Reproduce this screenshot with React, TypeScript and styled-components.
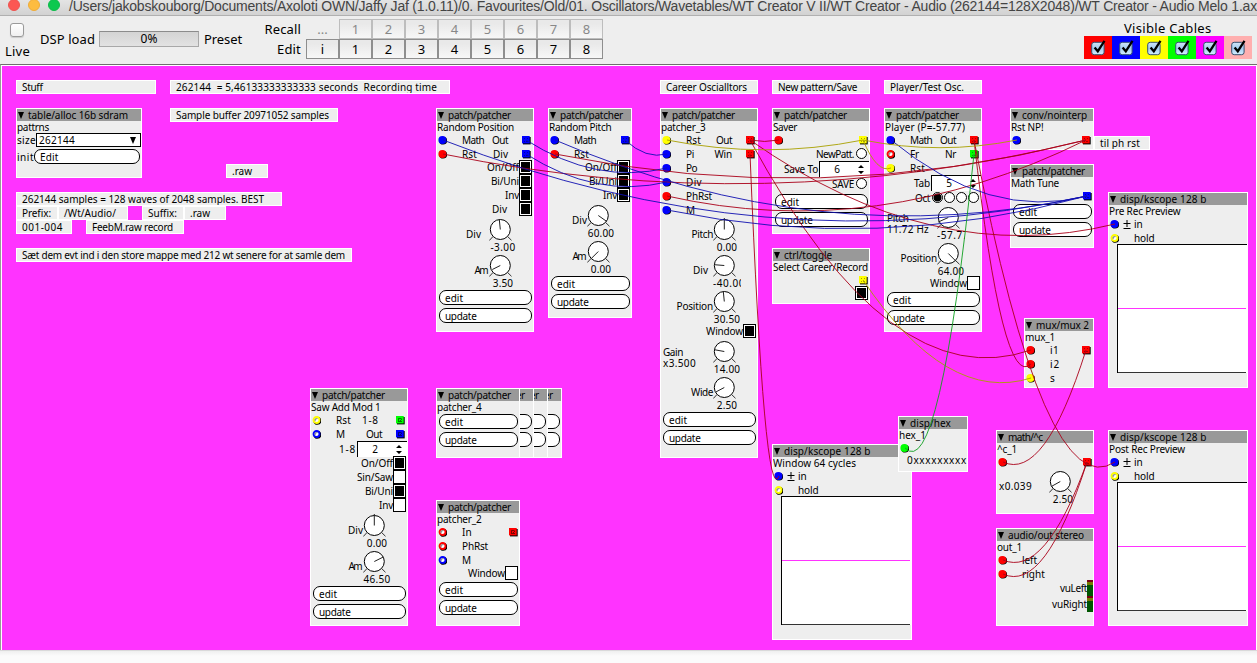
import React, { useLayoutEffect, useRef, useState } from "react";
import styled, { createGlobalStyle } from "styled-components";

const Global = createGlobalStyle`
  * { box-sizing: border-box; }
  html, body { margin: 0; padding: 0; overflow: hidden; background: #fafafa; }
  body { font-family: "Noto Sans", sans-serif; color: #000; }
`;

const COLORS = { red: "#ff0000", blue: "#0000ff", yellow: "#ffff00", green: "#00ff00" };
type Color = keyof typeof COLORS;

/* ---------- text ---------- */

const TextSpan = styled.span<{ $size: number; $color: string }>`
  display: inline-block;
  flex: none;
  font-size: ${(p) => p.$size}px;
  line-height: 12px;
  color: ${(p) => p.$color};
  white-space: pre;
`;

interface TextProps {
  children: string;
  w?: number;
  size?: number;
  color?: string;
}

/* Tracks its letters so that the string takes exactly w pixels. */
function Text({ children, w, size = 10, color = "#000" }: TextProps) {
  const ref = useRef<HTMLSpanElement>(null);
  const [spacing, setSpacing] = useState(0);
  useLayoutEffect(() => {
    const el = ref.current;
    if (!el || !w) return;
    el.style.letterSpacing = "0px";
    const natural = el.getBoundingClientRect().width;
    setSpacing((w - natural) / Math.max(1, children.length));
  }, [w, children]);
  return (
    <TextSpan ref={ref} $size={size} $color={color} style={{ letterSpacing: `${spacing}px` }}>
      {children}
    </TextSpan>
  );
}

/* ---------- window chrome ---------- */

const Window = styled.div`
  width: 1257px;
  height: 663px;
  display: flex;
  flex-direction: column;
  overflow: hidden;
`;

const TitleBar = styled.div`
  height: 16px;
  flex: none;
  display: flex;
  align-items: flex-start;
  background: linear-gradient(#e4e4e4, #d2d2d2);
  border-bottom: 1px solid #b0b0b0;
  overflow: hidden;
  font-family: "Liberation Sans", sans-serif;
`;

const Lights = styled.div`
  display: flex;
  gap: 8px;
  padding-left: 8px;
  margin-top: -1px;
  width: 69px;
  flex: none;
`;

const Light = styled.span<{ $fill: string; $edge: string }>`
  width: 12px;
  height: 12px;
  border-radius: 50%;
  background: ${(p) => p.$fill};
  border: 1px solid ${(p) => p.$edge};
`;

const TitleText = styled.div`
  display: flex;
  align-items: flex-start;
  height: 15px;
  white-space: pre;
`;

const Toolbar = styled.div`
  height: 48px;
  flex: none;
  display: flex;
  background: #eeeeee;
  padding-left: 5px;
`;

const LiveBox = styled.div`
  width: 35px;
  display: flex;
  flex-direction: column;
  align-items: flex-start;
  padding-top: 7px;
`;

const LiveCheck = styled.span`
  width: 14px;
  height: 14px;
  margin: 0 0 8px 5px;
  border: 1px solid #9a9a9a;
  border-radius: 3px;
  background: linear-gradient(#ffffff, #f0f0f0);
  box-shadow: 0 1px 1px rgba(0, 0, 0, 0.15);
`;

const DspGroup = styled.div`
  display: flex;
  align-items: center;
  height: 46px;
  width: 219px;
  gap: 5px;
`;

const DspBar = styled.div`
  width: 100px;
  height: 16px;
  margin-left: -1px;
  border: 1px solid #a8a8a8;
  border-top-color: #8c8c8c;
  background: linear-gradient(#d4d4d4, #e2e2e2);
  display: flex;
  align-items: center;
  justify-content: center;
`;

const PresetLabels = styled.div`
  width: 42px;
  padding-top: 3px;
  display: flex;
  flex-direction: column;
  align-items: flex-end;
`;

const PresetLabel = styled.div`
  height: 20px;
  display: flex;
  align-items: center;
`;

const PresetGrid = styled.div`
  margin-left: 5px;
  padding-top: 3px;
  display: grid;
  grid-template-columns: repeat(9, 33px);
  grid-template-rows: 20px 20px;
  width: 297px;
  align-content: start;
`;

const PresetButton = styled.div<{ $kind: "off" | "on" | "bare" }>`
  display: flex;
  align-items: center;
  justify-content: center;
  border: ${(p) => (p.$kind === "bare" ? "0" : p.$kind === "on" ? "1px solid #8e8e8e" : "1px solid #bdbdbd")};
  background: ${(p) => (p.$kind === "bare" ? "none" : "linear-gradient(#e9e9e9 20%, #f7f7f7)")};
`;

const CablesGroup = styled.div`
  margin-left: auto;
  width: 173px;
  padding-top: 6px;
  display: flex;
  flex-direction: column;
`;

const CablesTitle = styled.div`
  height: 14px;
  display: flex;
  align-items: flex-start;
  padding-left: 40px;
`;

const Swatches = styled.div`
  display: flex;
`;

const Swatch = styled.div<{ $bg: string }>`
  width: 28px;
  height: 23px;
  background: ${(p) => p.$bg};
  display: flex;
  align-items: center;
  justify-content: center;
`;

function CheckIcon() {
  return (
    <svg width="18" height="18" viewBox="0 0 18 18">
      <defs>
        <linearGradient id="aqua" x1="0" y1="0" x2="0" y2="1">
          <stop offset="0" stopColor="#cfe4f7" />
          <stop offset="0.5" stopColor="#a5cdf0" />
          <stop offset="1" stopColor="#d5f0ff" />
        </linearGradient>
      </defs>
      <rect x="2.7" y="3.3" width="12.4" height="12.4" rx="2.5" fill="url(#aqua)" stroke="#36506e" />
      <path d="M5.6 8.5 L8.8 12.3 L15.5 1.8" fill="none" stroke="#000" strokeWidth="2.3" />
    </svg>
  );
}

/* ---------- patch canvas ---------- */

const Canvas = styled.div`
  position: relative;
  height: 586px;
  flex: none;
  background: #ff33ff;
  border-top: 1px solid #6e6e6e;
  border-left: 1px solid #999999;
  overflow: hidden;
  &::before {
    content: "";
    position: absolute;
    inset: 0;
    border: 1px solid #ffffff;
    border-bottom: 0;
  }
`;

const Footer = styled.div`
  flex: 1;
  border-top: 1px solid #d9d9d9;
  background: linear-gradient(#efefef, #fbfbfb 5px);
`;

/* Shifts patch coordinates so that they count from the window corner. */
const Patch = styled.div`
  position: absolute;
  left: -1px;
  top: -65px;
  width: 1257px;
  height: 663px;
`;

const Place = styled.div<{ $x: number; $y: number; $w: number; $h: number }>`
  position: absolute;
  left: ${(p) => p.$x}px;
  top: ${(p) => p.$y}px;
  width: ${(p) => p.$w}px;
  height: ${(p) => p.$h}px;
  background: #eeeeee;
  border: 1px solid #ffffff;
  overflow: hidden;
`;

const NotePlace = styled(Place)`
  display: flex;
  align-items: center;
  padding-left: 5px;
`;

const Header = styled.div`
  height: 12px;
  display: flex;
  align-items: center;
  gap: 4px;
  padding-left: 1px;
  background: #999999;
`;

const Caption = styled.div`
  height: 12px;
  display: flex;
  align-items: center;
`;

const Row = styled.div<{ $h?: number; $lift?: number }>`
  height: ${(p) => p.$h ?? 14}px;
  padding-bottom: ${(p) => p.$lift ?? 0}px;
  display: flex;
  align-items: center;
`;

const PortLabel = styled.span`
  display: flex;
  padding-bottom: 1px;
`;

const Spring = styled.span`
  flex: 1;
`;

const Gap = styled.span<{ $w: number }>`
  width: ${(p) => p.$w}px;
  flex: none;
  display: flex;
  align-items: center;
  justify-content: center;
`;

interface NoteProps { x: number; y: number; w: number; text: string; tw: number }

function Note({ x, y, w, text, tw }: NoteProps) {
  return (
    <NotePlace $x={x} $y={y} $w={w} $h={14}>
      <Text w={tw}>{text}</Text>
    </NotePlace>
  );
}

interface ModuleProps {
  x: number; y: number; w: number; h: number;
  type: string; typeW: number;
  name: string; nameW: number;
  children?: React.ReactNode;
}

function Module({ x, y, w, h, type, typeW, name, nameW, children }: ModuleProps) {
  return (
    <Place $x={x} $y={y} $w={w} $h={h}>
      <Header>
        <svg width="6" height="7" viewBox="0 0 6 7"><path d="M0 0H6L3 7Z" /></svg>
        <Text w={typeW - 1}>{type}</Text>
      </Header>
      <Caption><Text w={nameW}>{name}</Text></Caption>
      {children}
    </Place>
  );
}

function Jack({ color, open }: { color: Color; open?: boolean }) {
  return (
    <svg width="10" height="10" viewBox="0 0 10 10">
      {open ? (
        <>
          <circle cx="6.3" cy="5.8" r="3.1" fill="none" stroke="#000" strokeWidth="1.8" />
          <circle cx="5.5" cy="5" r="3" fill="#fff" stroke={COLORS[color]} strokeWidth="1.8" />
          <path d="M4.1 6.2L4.1 4L6.5 3.6" fill="none" stroke="#444" strokeWidth="0.7" />
        </>
      ) : (
        <>
          <circle cx="6.2" cy="5.7" r="3.9" fill="#000" />
          <circle cx="5.4" cy="4.9" r="4" fill={COLORS[color]} />
        </>
      )}
    </svg>
  );
}

function Outlet({ color, open }: { color: Color; open?: boolean }) {
  return (
    <svg width="9" height="10" viewBox="0 0 9 10">
      <rect x="1" y="2" width="7.7" height="7.4" fill="#000" />
      <rect x="0" y="1" width="7.7" height="7.4" fill={COLORS[color]} />
      {open ? (
        <path d="M2.5 7V3.5H5.5M3 7L6 4M4 6.5H6" fill="none" stroke="#000" strokeOpacity="0.65" strokeWidth="0.8" />
      ) : (
        <path d="M2 3h1v1h-1zM5 3h1v1h-1zM2 6h1v1h-1zM4 6h2v1h-2z" fill="#000" fillOpacity="0.35" />
      )}
    </svg>
  );
}

interface PortProps {
  in?: Color; inOpen?: boolean; label?: string; lw?: number; sign?: boolean;
  out?: Color; outOpen?: boolean; outLabel?: string; ow?: number; edge?: number;
}

function Port(p: PortProps) {
  return (
    <Row>
      {p.in ? <Jack color={p.in} open={p.inOpen} /> : <Gap $w={10} />}
      <Gap $w={15}>
        {p.sign ? <svg width="8" height="10" viewBox="0 0 8 10"><path d="M0.5 4.5H7.5M4 1V8M0.5 9.5H7.5" stroke="#000" fill="none" /></svg> : null}
      </Gap>
      {p.label ? <PortLabel><Text w={p.lw}>{p.label}</Text></PortLabel> : null}
      <Spring />
      {p.outLabel ? <PortLabel><Text w={p.ow}>{p.outLabel}</Text></PortLabel> : null}
      {p.out ? <><Gap $w={14} /><Outlet color={p.out} open={p.outOpen} /><Gap $w={p.edge ?? 2} /></> : null}
    </Row>
  );
}

const ToggleBox = styled.span<{ $on: boolean }>`
  width: 13px;
  height: 14px;
  flex: none;
  border: 1px solid #000;
  margin-right: 1px;
  background: ${(p) => (p.$on ? "#000" : "#fff")};
  box-shadow: ${(p) => (p.$on ? "inset 0 0 0 1px #fff" : "none")};
`;

function Toggle({ label, lw, on = false, pad = 0 }: { label?: string; lw?: number; on?: boolean; pad?: number }) {
  return (
    <Row $lift={2}>
      <Spring />
      {label ? <Text w={lw}>{label}</Text> : null}
      <Gap $w={pad} />
      <ToggleBox $on={on} />
    </Row>
  );
}

const Radio = styled.span<{ $on?: boolean }>`
  width: 11px;
  height: 11px;
  margin-right: 1px;
  flex: none;
  border-radius: 50%;
  border: 1px solid #000;
  background: ${(p) => (p.$on ? "radial-gradient(#000 0 3.6px, #fff 4.4px)" : "#fff")};
`;

function Radios({ label, lw, count = 1, on = -1 }: { label: string; lw: number; count?: number; on?: number }) {
  return (
    <Row $lift={1}>
      <Spring />
      <Text w={lw}>{label}</Text>
      <Gap $w={2} />
      {Array.from({ length: count }, (_, i) => <Radio key={i} $on={i === on} />)}
      <Gap $w={1} />
    </Row>
  );
}

const SpinBox = styled.span`
  width: 50px;
  height: 16px;
  flex: none;
  display: flex;
  align-items: center;
  background: #fff;
  border-top: 1px solid #000;
  border-left: 1px solid #000;
`;

const SpinValue = styled.span`
  width: 34px;
  padding-bottom: 1px;
  display: flex;
  justify-content: center;
`;

function Spinner({ label, lw, value }: { label: string; lw: number; value: string }) {
  return (
    <Row $h={16} $lift={1}>
      <Spring />
      <Text w={lw}>{label}</Text>
      <Gap $w={1} />
      <SpinBox>
        <SpinValue><Text>{value}</Text></SpinValue>
        <Gap $w={14}>
          <svg width="6" height="9" viewBox="0 0 6 9"><path d="M0 3L3 0L6 3ZM0 6L3 9L6 6Z" /></svg>
        </Gap>
      </SpinBox>
    </Row>
  );
}

const KnobRow = styled.div`
  height: 36px;
  display: flex;
`;

const KnobSide = styled.div`
  flex: 1;
  display: flex;
  flex-direction: column;
  align-items: flex-end;
  padding-top: 11px;
`;

const GainSide = styled.div<{ $top: number }>`
  flex: 1;
  padding: ${(p) => p.$top}px 0 0 2px;
  display: flex;
  flex-direction: column;
  align-items: flex-start;
`;

const KnobColumn = styled.div`
  width: 28px;
  margin-right: 16px;
  flex: none;
  display: flex;
  flex-direction: column;
`;

const KnobValue = styled.div`
  height: 12px;
  display: flex;
  justify-content: safe center;
  overflow: hidden;
`;

interface KnobProps {
  label?: string; lw?: number; pad?: number; value: string; vw: number; tip: [number, number];
  side?: React.ReactNode;
}

function Knob({ label, lw, pad = 0, value, vw, tip, side }: KnobProps) {
  return (
    <KnobRow>
      {side ?? (
        <KnobSide>
          <Row $h={12}>
            {label ? <Text w={lw}>{label}</Text> : null}
            <Gap $w={pad} />
          </Row>
        </KnobSide>
      )}
      <KnobColumn>
        <svg width="28" height="24" viewBox="0 0 28 24">
          <path d="M4 19.5L0.3 23.5M18.6 19.5L22.5 23.3" stroke="#333" fill="none" />
          <circle cx="11.3" cy="12.5" r="10" fill="#fff" stroke="#000" />
          <path d={`M11.3 12.5l${tip[0]} ${tip[1]}`} stroke="#222" fill="none" />
        </svg>
        <KnobValue><Text w={vw}>{value}</Text></KnobValue>
      </KnobColumn>
    </KnobRow>
  );
}

const PillRow = styled.div`
  height: 18px;
  padding: 1px 1px 0 2px;
`;

const Pill = styled.div`
  height: 15px;
  border: 1px solid #000;
  border-radius: 7px;
  background: #fff;
  display: flex;
  align-items: center;
  padding-left: 5px;
  flex: 1;
`;

function EditUpdate() {
  return (
    <>
      <PillRow><Pill><Text w={18}>edit</Text></Pill></PillRow>
      <PillRow><Pill><Text w={31.5}>update</Text></Pill></PillRow>
    </>
  );
}

const Combo = styled.div`
  flex: 1;
  height: 14px;
  background: #fff;
  border: 1px solid #000;
  display: flex;
  align-items: center;
  justify-content: space-between;
  padding: 0 4px 0 2px;
`;

const InitRow = styled.div`
  margin-top: 2px;
  padding: 0 1px 0 0;
  display: flex;
  align-items: center;
`;

const Scope = styled.div`
  margin: -1px 0 0 8px;
  height: 129px;
  flex: none;
  background: #fff;
  border-top: 1px solid #000;
  border-left: 1px solid #000;
  display: flex;
  flex-direction: column;
`;

const ScopeTrace = styled.div`
  margin: 63px 1px 0 0;
  height: 1px;
  background: #ff33ff;
`;

const ScopeFloor = styled.div`
  margin: 63px 1px 0 0;
  height: 1px;
  background: #333;
`;

function KScope({ x, y, name, nameW }: { x: number; y: number; name: string; nameW: number }) {
  return (
    <Module x={x} y={y} w={140} h={196} type="disp/kscope 128 b" typeW={87.5} name={name} nameW={nameW}>
      <Port in="blue" sign label="in" lw={8.5} />
      <Port in="yellow" inOpen label="hold" lw={20.5} />
      <Scope><ScopeTrace /><ScopeFloor /></Scope>
    </Module>
  );
}

const Meter = styled.span`
  width: 6px;
  height: 16px;
  flex: none;
  background: linear-gradient(#770011 0 2px, #777700 2px 5px, #005500 5px);
`;

function Patcher4({ x }: { x: number }) {
  return (
    <Module x={x} y={388} w={84} h={70} type="patch/patcher" typeW={64} name="patcher_4" nameW={44.5}>
      <EditUpdate />
    </Module>
  );
}

/* ---------- cables ---------- */

const CableLayer = styled.svg`
  position: absolute;
  left: 0;
  top: 0;
  pointer-events: none;
`;

const CABLE_COLORS: Record<Color, string> = {
  red: "#aa0018", blue: "#1010b0", yellow: "#a8a000", green: "#10a020",
};

type Cable = [Color, number, number, number, number];

const CABLES: Cable[] = [
  ["red", 750, 140, 779, 140],
  ["red", 750, 140, 1031, 350],
  ["red", 750, 140, 1115, 224],
  ["red", 443, 154, 1086, 140],
  ["red", 555, 154, 1086, 140],
  ["red", 667, 196, 1086, 140],
  ["red", 750, 154, 779, 476],
  ["red", 974, 140, 1031, 364],
  ["red", 974, 140, 1115, 462],
  ["red", 1087, 462, 1003, 560],
  ["red", 1087, 462, 1003, 574],
  ["red", 1086, 350, 1003, 462],
  ["blue", 526, 140, 667, 168],
  ["blue", 526, 154, 667, 182],
  ["blue", 625, 140, 667, 154],
  ["blue", 443, 140, 1087, 196],
  ["blue", 555, 140, 1087, 196],
  ["blue", 667, 210, 1087, 196],
  ["blue", 891, 140, 1087, 196],
  ["yellow", 863, 140, 667, 140],
  ["yellow", 863, 140, 891, 168],
  ["yellow", 863, 140, 1017, 140],
  ["yellow", 863, 280, 1031, 378],
  ["green", 974, 154, 905, 448],
];

function cablePath([, x1, y1, x2, y2]: Cable) {
  const sagY = Math.max(y1, y2) + Math.abs(y2 - y1) * 0.1 + Math.abs(x2 - x1) * 0.1;
  return `M${x1} ${y1}Q${(x1 + x2) / 2} ${sagY} ${x2} ${y2}`;
}

const NOTES: NoteProps[] = [
  { x: 16, y: 80, w: 140, text: "Stuff", tw: 20.5 },
  { x: 170, y: 80, w: 280, text: "262144  = 5,46133333333333 seconds  Recording time", tw: 261 },
  { x: 170, y: 108, w: 168, text: "Sample buffer 20971052 samples", tw: 153 },
  { x: 660, y: 80, w: 98, text: "Career Oscialltors", tw: 81 },
  { x: 772, y: 80, w: 98, text: "New pattern/Save", tw: 79 },
  { x: 884, y: 80, w: 98, text: "Player/Test Osc.", tw: 74 },
  { x: 226, y: 164, w: 42, text: ".raw", tw: 20 },
  { x: 16, y: 192, w: 266, text: "262144 samples = 128 waves of 2048 samples. BEST", tw: 242 },
  { x: 16, y: 206, w: 42, text: "Prefix:", tw: 29 },
  { x: 58, y: 206, w: 70, text: "/Wt/Audio/", tw: 52 },
  { x: 142, y: 206, w: 42, text: "Suffix:", tw: 29 },
  { x: 184, y: 206, w: 42, text: ".raw", tw: 20 },
  { x: 16, y: 220, w: 56, text: "001-004", tw: 41 },
  { x: 86, y: 220, w: 98, text: "FeebM.raw record", tw: 81 },
  { x: 16, y: 248, w: 336, text: "Sæt dem evt ind i den store mappe med 212 wt senere for at samle dem", tw: 323 },
];

const TITLE =
  "/Users/jakobskouborg/Documents/Axoloti OWN/Jaffy Jaf (1.0.11)/0. Favourites/Old/01. Oscillators/Wavetables/WT Creator V II/WT Creator - Audio (262144=128X2048)/WT Creator - Audio Melo 1.ax";

export default function App() {
  const presets = ["1", "2", "3", "4", "5", "6", "7", "8"];
  return (
    <>
      <Global />
      <Window>
        <TitleBar>
          <Lights>
            <Light $fill="#fc5753" $edge="#ee5450" />
            <Light $fill="#fdbc40" $edge="#efac38" />
            <Light $fill="#0cc84f" $edge="#0dbb4a" />
          </Lights>
          <TitleText><Text w={1188} size={14} color="#444">{TITLE}</Text></TitleText>
        </TitleBar>

        <Toolbar>
          <LiveBox>
            <LiveCheck />
            <Text w={25} size={13}>Live</Text>
          </LiveBox>
          <DspGroup>
            <Text w={55} size={13}>DSP load</Text>
            <DspBar><Text w={17} size={12}>0%</Text></DspBar>
            <Text w={38} size={13}>Preset</Text>
          </DspGroup>
          <PresetLabels>
            <PresetLabel><Text w={36.5} size={13}>Recall</Text></PresetLabel>
            <PresetLabel><Text w={24} size={13}>Edit</Text></PresetLabel>
          </PresetLabels>
          <PresetGrid>
            <PresetButton $kind="bare"><Text size={13} color="#888">...</Text></PresetButton>
            {presets.map((n) => (
              <PresetButton key={n} $kind="off"><Text size={13} color="#888">{n}</Text></PresetButton>
            ))}
            {["i", ...presets].map((n) => (
              <PresetButton key={n} $kind="on"><Text size={13}>{n}</Text></PresetButton>
            ))}
          </PresetGrid>
          <CablesGroup>
            <CablesTitle><Text w={87.5} size={13}>Visible Cables</Text></CablesTitle>
            <Swatches>
              {["#ff0000", "#0000ff", "#ffff00", "#00ff00", "#ff00ff", "#ffafaf"].map((c) => (
                <Swatch key={c} $bg={c}><CheckIcon /></Swatch>
              ))}
            </Swatches>
          </CablesGroup>
        </Toolbar>

        <Canvas>
          <Patch>
            {NOTES.map((n) => <Note key={`${n.x}-${n.y}`} {...n} />)}

            <Module x={16} y={108} w={126} h={70} type="table/alloc 16b sdram" typeW={101} name="pattrns" nameW={32}>
              <Row>
                <Text w={19}>size</Text>
                <Combo>
                  <Text w={36}>262144</Text>
                  <svg width="6" height="7" viewBox="0 0 6 7"><path d="M0 0H6L3 7Z" /></svg>
                </Combo>
              </Row>
              <InitRow>
                <Text w={17}>init</Text>
                <Pill><Text w={18.5}>Edit</Text></Pill>
              </InitRow>
            </Module>

            <Module x={436} y={108} w={98} h={224} type="patch/patcher" typeW={64} name="Random Position" nameW={77}>
              <Port in="blue" label="Math" lw={22} out="blue" outLabel="Out" ow={16} />
              <Port in="red" label="Rst" lw={15} out="blue" outLabel="Div" ow={15} />
              <Toggle label="On/Off" lw={32} on />
              <Toggle label="Bi/Uni" lw={28} on />
              <Toggle label="Inv" lw={14} on />
              <Toggle label="Div" lw={15} on pad={12} />
              <Knob label="Div" lw={15} pad={8} value="-3.00" vw={25} tip={[-1, -10]} />
              <Knob label="Am" lw={12.5} pad={2} value="3.50" vw={20.5} tip={[-8, 4]} />
              <EditUpdate />
            </Module>

            <Module x={548} y={108} w={84} h={210} type="patch/patcher" typeW={64} name="Random Pitch" nameW={62.5}>
              <Port in="blue" label="Math" lw={22} out="blue" edge={1} />
              <Port in="red" label="Rst" lw={15} />
              <Toggle label="On/Off" lw={32} on />
              <Toggle label="Bi/Uni" lw={28} on />
              <Toggle label="Inv" lw={14} on />
              <Knob label="Div" lw={15} value="60.00" vw={26.5} tip={[8.5, 6]} />
              <Knob label="Am" lw={12.5} pad={2} value="0.00" vw={20.5} tip={[-7, 7]} />
              <EditUpdate />
            </Module>

            <Module x={660} y={108} w={98} h={350} type="patch/patcher" typeW={64} name="patcher_3" nameW={44.5}>
              <Port in="yellow" label="Rst" lw={15} out="red" outLabel="Out" ow={16} />
              <Port in="blue" label="Pi" lw={8} out="red" outLabel="Win" ow={17.5} />
              <Port in="blue" label="Po" lw={11} />
              <Port in="blue" label="Div" lw={16} />
              <Port in="red" label="PhRst" lw={26} />
              <Port in="blue" label="M" lw={8} />
              <Knob label="Pitch" lw={21.5} value="0.00" vw={20.5} tip={[0, -11.5]} />
              <Knob label="Div" lw={15} pad={5} value="-40.00" vw={32} tip={[-10, -0.8]} />
              <Knob label="Position" lw={36.5} value="30.50" vw={26.5} tip={[-1, -10]} />
              <Toggle label="Window" lw={37} on />
              <Knob
                side={<GainSide $top={7}><Row $h={11}><Text w={20}>Gain</Text></Row><Row $h={11}><Text w={33}>x3.500</Text></Row></GainSide>}
                value="14.00" vw={26.5} tip={[-10, -1.8]}
              />
              <Knob label="Wide" lw={22} value="2.50" vw={20.5} tip={[-8.5, 4.5]} />
              <EditUpdate />
            </Module>

            <Module x={772} y={108} w={98} h={126} type="patch/patcher" typeW={64} name="Saver" nameW={24}>
              <Port in="red" out="yellow" edge={1} />
              <Radios label="NewPatt." lw={38} />
              <Spinner label="Save To" lw={34} value="6" />
              <Radios label="SAVE" lw={22} />
              <Row $h={2} />
              <EditUpdate />
            </Module>

            <Module x={772} y={248} w={98} h={56} type="ctrl/toggle" typeW={49} name="Select Career/Record" nameW={95}>
              <Port out="yellow" edge={1} />
              <Toggle on />
            </Module>

            <Module x={884} y={108} w={98} h={224} type="patch/patcher" typeW={64} name="Player (P=-57.77)" nameW={80}>
              <Port in="blue" label="Math" lw={22} out="red" outLabel="Out" ow={16} />
              <Port in="red" inOpen label="Fr" lw={9} out="green" outLabel="Nr" ow={11} />
              <Port in="yellow" label="Rst" lw={15} />
              <Spinner label="Tab" lw={16} value="5" />
              <Radios label="Oct" lw={15} count={4} on={0} />
              <Knob
                side={<GainSide $top={7}><Row $h={11}><Text w={21.5}>Pitch</Text></Row><Row $h={11}><Text w={42}>11.72 Hz</Text></Row></GainSide>}
                value="-57.77" vw={32} tip={[-10, 4.5]}
              />
              <Knob label="Position" lw={36.5} value="64.00" vw={26.5} tip={[8, 8]} />
              <Toggle label="Window" lw={37} />
              <EditUpdate />
            </Module>

            <Module x={1010} y={108} w={84} h={42} type="conv/nointerp" typeW={66} name="Rst NP!" nameW={32.5}>
              <Port in="blue" out="red" />
            </Module>
            <Note x={1094} y={136} w={56} text="til ph rst" tw={40} />

            <Module x={1010} y={164} w={84} h={84} type="patch/patcher" typeW={64} name="Math Tune" nameW={48}>
              <Port out="blue" edge={1} />
              <EditUpdate />
            </Module>

            <KScope x={1108} y={192} name="Pre Rec Preview" nameW={71.5} />

            <Module x={1024} y={318} w={70} h={70} type="mux/mux 2" typeW={54} name="mux_1" nameW={30}>
              <Port in="red" label="i1" lw={9} out="red" />
              <Port in="red" label="i2" lw={10} />
              <Port in="yellow" label="s" lw={5} />
            </Module>

            <Module x={310} y={388} w={98} h={238} type="patch/patcher" typeW={64} name="Saw Add Mod 1" nameW={69.5}>
              <Port in="yellow" inOpen label="Rst" lw={15} out="green" outOpen outLabel="1-8 " ow={20} />
              <Port in="blue" inOpen label="M" lw={8} out="blue" outOpen outLabel="Out" ow={16} />
              <Spinner label="1-8" lw={17} value="2" />
              <Toggle label="On/Off" lw={32} on />
              <Toggle label="Sin/Saw" lw={36} />
              <Toggle label="Bi/Uni" lw={28} on />
              <Toggle label="Inv" lw={14} />
              <Knob label="Div" lw={15} value="0.00" vw={20.5} tip={[0, -11.5]} />
              <Knob label="Am" lw={12.5} pad={2} value="46.50" vw={27} tip={[9, -4.5]} />
              <EditUpdate />
            </Module>

            <Patcher4 x={478} />
            <Patcher4 x={464} />
            <Patcher4 x={450} />
            <Patcher4 x={436} />

            <Module x={436} y={500} w={84} h={126} type="patch/patcher" typeW={64} name="patcher_2" nameW={44.5}>
              <Port in="red" inOpen label="In" lw={10} out="red" outOpen edge={1} />
              <Port in="red" inOpen label="PhRst" lw={26} />
              <Port in="blue" inOpen label="M" lw={8} />
              <Toggle label="Window" lw={37} />
              <EditUpdate />
            </Module>

            <KScope x={772} y={444} name="Window 64 cycles" nameW={83} />

            <Module x={898} y={416} w={70} h={56} type="disp/hex" typeW={42} name="hex_1" nameW={27}>
              <Port in="green" />
              <Row $h={12} $lift={2}><Gap $w={8} /><Text w={60}>0xxxxxxxxx</Text></Row>
            </Module>

            <Module x={996} y={430} w={98} h={84} type="math/^c" typeW={35.5} name="^c_1" nameW={20}>
              <Port in="red" out="red" edge={1} />
              <Knob
                side={<GainSide $top={11}><Text w={33}>x0.039</Text></GainSide>}
                value="2.50" vw={20.5} tip={[-9, 5]}
              />
            </Module>

            <Module x={996} y={528} w={98} h={98} type="audio/out stereo" typeW={77} name="out_1" nameW={25}>
              <Port in="red" label="left" lw={15} />
              <Port in="red" label="right" lw={23} />
              <Row $h={16} $lift={2}><Spring /><Text w={27}>vuLeft</Text><Meter /></Row>
              <Row $h={16} $lift={2}><Spring /><Text w={35}>vuRight</Text><Meter /></Row>
            </Module>

            <KScope x={1108} y={430} name="Post Rec Preview" nameW={76} />

            <CableLayer width="1257" height="663" viewBox="0 0 1257 663" fill="none">
              {CABLES.map((c, i) => (
                <path key={i} d={cablePath(c)} stroke={CABLE_COLORS[c[0]]} strokeOpacity="0.9" />
              ))}
            </CableLayer>
          </Patch>
        </Canvas>
        <Footer />
      </Window>
    </>
  );
}
